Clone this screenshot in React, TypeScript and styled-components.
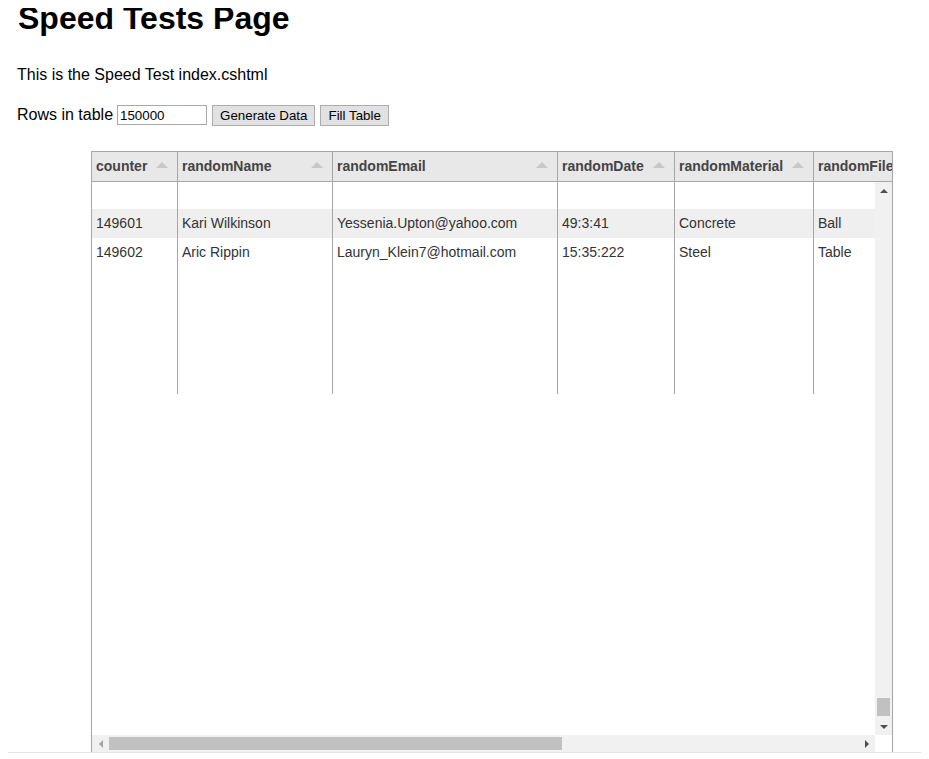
import * as React from "react";
import styled, { createGlobalStyle } from "styled-components";

const GlobalStyle = createGlobalStyle`
  body {
    margin: 8px;
    font-family: "Liberation Sans", Arial, sans-serif;
    background: #ffffff;
    color: #000000;
  }
`;

const Page = styled.div`
  display: flex;
  flex-direction: column;
`;

const Title = styled.h1`
  font-size: 32px;
  font-weight: bold;
  line-height: 36px;
  margin: -8px 0 0 0;
  padding-left: 10px;
`;

const Intro = styled.p`
  font-size: 16px;
  margin: 29px 0 0 0;
  padding-left: 9px;
  line-height: 20px;
`;

const Controls = styled.div`
  display: flex;
  align-items: center;
  gap: 5px;
  margin-top: 19px;
  padding-left: 9px;
  font-size: 16px;
  height: 22px;
`;

const Label = styled.span`
  margin-right: -1px;
`;

const NumberInput = styled.input`
  width: 90px;
  height: 20px;
  box-sizing: border-box;
  border: 1px solid #a9a9a9;
  padding: 1px 2px;
  font-family: "Liberation Sans", Arial, sans-serif;
  font-size: 13.33px;
`;

const Button = styled.button`
  height: 21px;
  box-sizing: border-box;
  border: 1px solid #adadad;
  background: #e1e1e1;
  padding: 0 7px;
  font-family: "Liberation Sans", Arial, sans-serif;
  font-size: 13.33px;
  color: #000;
`;

const Grid = styled.div`
  margin: 25px 0 0 83px;
  width: 802px;
  height: 602px;
  box-sizing: border-box;
  border: 1px solid #a6a6a6;
  display: flex;
  flex-direction: column;
  overflow: hidden;
  font-size: 14px;
`;

const HeaderRow = styled.div`
  display: flex;
  height: 30px;
  flex: none;
  background: #e8e8e8;
  border-bottom: 1px solid #a6a6a6;
  box-sizing: border-box;
`;

const HeaderCell = styled.div<{ $w: number }>`
  flex: none;
  width: ${(p) => p.$w}px;
  box-sizing: border-box;
  border-right: 1px solid #a6a6a6;
  display: flex;
  align-items: center;
  justify-content: space-between;
  padding: 0 9px 2px 4px;
  font-weight: bold;
  color: #444444;
  white-space: nowrap;
`;

const SortArrow = styled.span`
  width: 0;
  height: 0;
  border-left: 6px solid transparent;
  border-right: 6px solid transparent;
  border-bottom: 6px solid #c8c8c8;
  margin-top: -2px;
`;

const BodyArea = styled.div`
  flex: 1;
  display: flex;
  min-height: 0;
`;

const Viewport = styled.div`
  flex: 1;
  display: flex;
  flex-direction: column;
  min-width: 0;
`;

const Rows = styled.div`
  flex: 1;
  overflow: hidden;
`;

const Row = styled.div<{ $alt?: boolean; $h: number }>`
  display: flex;
  height: ${(p) => p.$h}px;
  background: ${(p) => (p.$alt ? "#efefef" : "#ffffff")};
`;

const Cell = styled.div<{ $w: number }>`
  flex: none;
  width: ${(p) => p.$w}px;
  box-sizing: border-box;
  border-right: 1px solid #a6a6a6;
  padding: 0 4px 2px 4px;
  display: flex;
  align-items: center;
  color: #333333;
  white-space: nowrap;
  overflow: hidden;
`;

const VScroll = styled.div`
  width: 17px;
  flex: 1;
  background: #f1f1f1;
  display: flex;
  flex-direction: column;
  align-items: center;
`;

const HScroll = styled.div`
  height: 17px;
  flex: none;
  background: #f1f1f1;
  display: flex;
  align-items: center;
`;

const ArrowBtn = styled.div`
  width: 17px;
  height: 17px;
  flex: none;
  display: flex;
  align-items: center;
  justify-content: center;
`;

const Tri = styled.span<{ $dir: "up" | "down" | "left" | "right"; $c: string }>`
  width: 0;
  height: 0;
  border: 4px solid transparent;
  ${(p) =>
    p.$dir === "up"
      ? `border-bottom-color: ${p.$c}; border-top-width: 0;`
      : p.$dir === "down"
      ? `border-top-color: ${p.$c}; border-bottom-width: 0;`
      : p.$dir === "left"
      ? `border-right-color: ${p.$c}; border-left-width: 0;`
      : `border-left-color: ${p.$c}; border-right-width: 0;`}
`;

const VTrack = styled.div`
  flex: 1;
  width: 100%;
  display: flex;
  flex-direction: column;
  justify-content: flex-end;
  align-items: center;
`;

const VThumb = styled.div`
  width: 13px;
  height: 18px;
  background: #c1c1c1;
  margin-bottom: 2px;
`;

const HTrack = styled.div`
  flex: 1;
  height: 100%;
  display: flex;
  align-items: center;
`;

const HThumb = styled.div`
  width: 453px;
  height: 13px;
  background: #c1c1c1;
`;

const Corner = styled.div`
  width: 17px;
  height: 17px;
  background: #ffffff;
`;

const RightCol = styled.div`
  display: flex;
  flex-direction: column;
  flex: none;
`;

const Rule = styled.hr`
  margin: -1px 0 0 0;
  width: calc(100% + 8px);
  box-sizing: border-box;
  border: 0;
  border-top: 1px solid #e5e5e5;
  height: 0;
`;

const columns = [
  { key: "counter", w: 86 },
  { key: "randomName", w: 155 },
  { key: "randomEmail", w: 225 },
  { key: "randomDate", w: 117 },
  { key: "randomMaterial", w: 139 },
  { key: "randomFile", w: 150 },
];

const data = [
  ["149601", "Kari Wilkinson", "Yessenia.Upton@yahoo.com", "49:3:41", "Concrete", "Ball"],
  ["149602", "Aric Rippin", "Lauryn_Klein7@hotmail.com", "15:35:222", "Steel", "Table"],
];

export default function App() {
  return (
    <>
      <GlobalStyle />
      <Page>
        <Title>Speed Tests Page</Title>
        <Intro>This is the Speed Test index.cshtml</Intro>
        <Controls>
          <Label>Rows in table</Label>
          <NumberInput defaultValue="150000" />
          <Button>Generate Data</Button>
          <Button>Fill Table</Button>
        </Controls>
        <Grid>
          <HeaderRow>
            {columns.map((c) => (
              <HeaderCell key={c.key} $w={c.w}>
                {c.key}
                <SortArrow />
              </HeaderCell>
            ))}
          </HeaderRow>
          <BodyArea>
            <Viewport>
              <Rows>
                <Row $h={27}>
                  {columns.map((c) => (
                    <Cell key={c.key} $w={c.w} />
                  ))}
                </Row>
                {data.map((r, i) => (
                  <Row key={r[0]} $alt={i === 0} $h={29}>
                    {columns.map((c, j) => (
                      <Cell key={c.key} $w={c.w}>
                        {r[j]}
                      </Cell>
                    ))}
                  </Row>
                ))}
                <Row $h={127}>
                  {columns.map((c) => (
                    <Cell key={c.key} $w={c.w} />
                  ))}
                </Row>
              </Rows>
              <HScroll>
                <ArrowBtn>
                  <Tri $dir="left" $c="#a3a3a3" />
                </ArrowBtn>
                <HTrack>
                  <HThumb />
                </HTrack>
                <ArrowBtn>
                  <Tri $dir="right" $c="#505050" />
                </ArrowBtn>
              </HScroll>
            </Viewport>
            <RightCol>
              <VScroll>
                <ArrowBtn>
                  <Tri $dir="up" $c="#505050" />
                </ArrowBtn>
                <VTrack>
                  <VThumb />
                </VTrack>
                <ArrowBtn>
                  <Tri $dir="down" $c="#505050" />
                </ArrowBtn>
              </VScroll>
              <Corner />
            </RightCol>
          </BodyArea>
        </Grid>
        <Rule />
      </Page>
    </>
  );
}
